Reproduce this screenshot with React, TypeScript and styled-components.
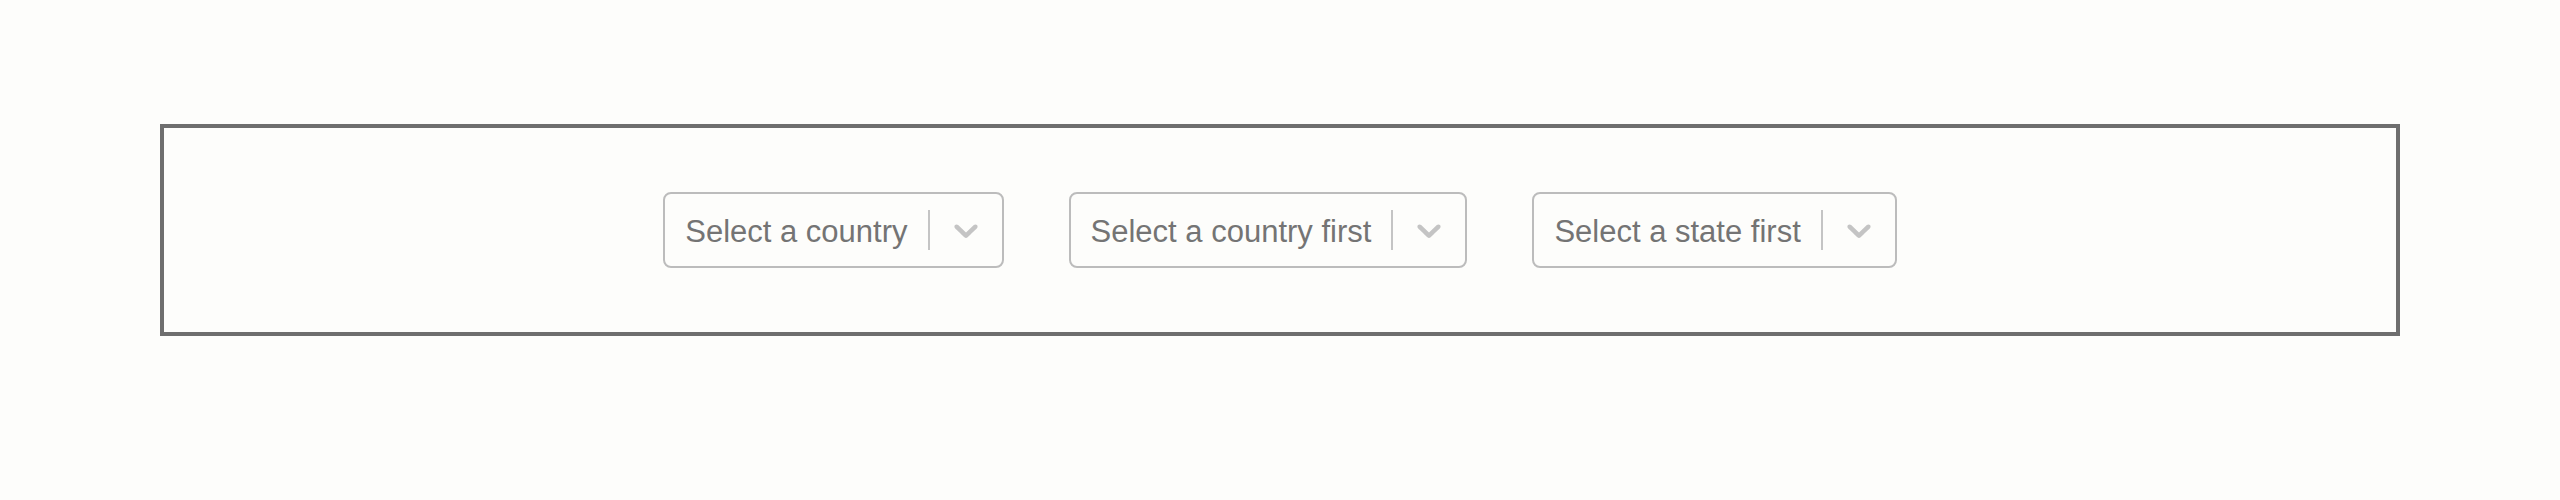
import React from "react";
import styled, { createGlobalStyle } from "styled-components";

const GlobalStyle = createGlobalStyle`
  html, body {
    margin: 0;
    padding: 0;
    background: #fdfdfb;
  }
  body {
    font-family: "Liberation Sans", Arial, sans-serif;
  }
`;

const Page = styled.div`
  padding: 124px 160px 0;
`;

const Frame = styled.div`
  box-sizing: border-box;
  width: 2240px;
  height: 212px;
  border: 4px solid #6e6e6e;
  display: flex;
  align-items: center;
  justify-content: center;
  gap: 65px;
`;

const Control = styled.div`
  box-sizing: border-box;
  display: flex;
  align-items: center;
  min-height: 76px;
  border: 2px solid #bcbcbc;
  border-radius: 8px;
  background: #fdfdfb;
  cursor: default;
`;

const ValueContainer = styled.div`
  padding: 6px 16px 2px;
  display: flex;
  align-items: center;
`;

const Placeholder = styled.span`
  margin: 0 4px;
  font-size: 31px;
  color: #747474;
  white-space: nowrap;
`;

const Indicators = styled.div`
  display: flex;
  align-self: stretch;
  align-items: center;
`;

const Separator = styled.span`
  align-self: stretch;
  width: 2px;
  margin: 16px 0;
  background: #c4c4c4;
`;

const Indicator = styled.div`
  display: flex;
  padding: 16px;
  color: #c4c4c4;
`;

const Chevron = () => (
  <svg width="40" height="40" viewBox="0 0 20 20" fill="currentColor" aria-hidden="true">
    <path d="M4.516 7.548c0.436-0.446 1.043-0.481 1.576 0l3.908 3.747 3.908-3.747c0.533-0.481 1.141-0.446 1.574 0 0.436 0.445 0.408 1.197 0 1.615-0.406 0.418-4.695 4.502-4.695 4.502-0.217 0.223-0.502 0.335-0.787 0.335s-0.57-0.112-0.789-0.335c0 0-4.287-4.084-4.695-4.502s-0.436-1.17 0-1.615z" />
  </svg>
);

const Select = ({ placeholder }: { placeholder: string }) => (
  <Control>
    <ValueContainer>
      <Placeholder>{placeholder}</Placeholder>
    </ValueContainer>
    <Indicators>
      <Separator />
      <Indicator>
        <Chevron />
      </Indicator>
    </Indicators>
  </Control>
);

const App = () => {
  return (
    <>
      <GlobalStyle />
      <Page>
        <Frame>
          <Select placeholder="Select a country" />
          <Select placeholder="Select a country first" />
          <Select placeholder="Select a state first" />
        </Frame>
      </Page>
    </>
  );
};

export default App;
